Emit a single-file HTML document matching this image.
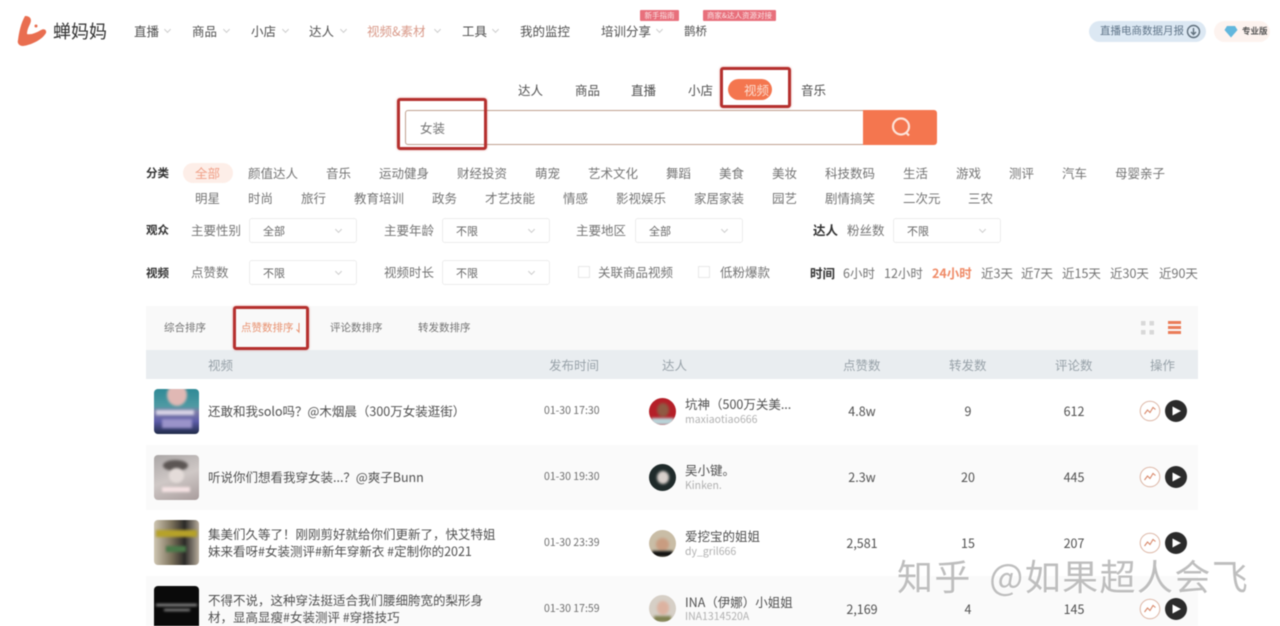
<!DOCTYPE html>
<html lang="zh-CN"><head><meta charset="utf-8"><title>蝉妈妈</title>
<style>
*{box-sizing:border-box;margin:0;padding:0}
html,body{width:1280px;height:626px;overflow:hidden;background:#fff}
body{position:relative;font-family:"Noto Sans CJK SC","Liberation Sans",sans-serif;color:#555}
#w{position:absolute;left:0;top:0;width:1280px;height:626px;overflow:hidden;filter:blur(.5px)}
.a{position:absolute}
.t{position:absolute;white-space:nowrap;line-height:20px;height:20px;font-size:12.5px}
.n{color:#505050}
.b{font-weight:700;color:#333;font-size:11.5px}
.g{color:#747474}
.s{position:absolute;width:108px;height:25px;border:1px solid #ececec;border-radius:3px;background:#fff}
.s span{position:absolute;left:13px;top:2px;font-size:11px;line-height:20px;color:#666}
.s i,.c{position:absolute;width:5px;height:5px;border-right:1px solid #ccc;border-bottom:1px solid #ccc;transform:rotate(45deg)}
.s i{right:15px;top:8px}
.cb{position:absolute;width:12px;height:12px;border:1px solid #e8e8e8;background:#fff}
.r{position:absolute;left:146px;width:1052px}
.th{position:absolute;left:154px;width:45px;height:45px;border-radius:4px;overflow:hidden}
.th div,.av div{filter:blur(1.2px)}
.av{position:absolute;left:649px;width:27px;height:27px;border-radius:50%;overflow:hidden}
.ctr{transform:translateX(-50%)}
.rb{position:absolute;border:3px solid #b5302e;border-radius:3px;box-shadow:0 0 2px rgba(200,70,60,.5)}
.tag{position:absolute;height:11px;background:#e8707c;color:#fbe3e5;font-size:7.5px;line-height:11px;text-align:center;border-radius:1px;white-space:nowrap}
.sub{font-size:10.5px;color:#b0b0b0}
.tm{font-size:10.5px;color:#6e6e6e}
</style></head><body><div id="w">

<!-- logo -->
<svg class="a" style="left:16px;top:15px" width="32" height="32" viewBox="0 0 32 32"><path d="M9 1C15 1 16 5 14 9C12 13 11 16 11 19C15 20 20 18 25 15C28 13 31 15 30 18C26 25 15 30 7 31C3 31 1 28 2 25C3 17 5 8 9 1Z" fill="#e96e50"/><circle cx="20" cy="11" r="1.500" fill="#e96e50"/></svg>
<div class="t" style="left:53px;top:20px;font-size:18px;line-height:22px;height:22px;color:#333">蝉妈妈</div>

<!-- nav -->
<div class="t n" style="left:134px;top:21px">直播</div><i class="c" style="left:165px;top:27px"></i>
<div class="t n" style="left:192px;top:21px">商品</div><i class="c" style="left:224px;top:27px"></i>
<div class="t n" style="left:251px;top:21px">小店</div><i class="c" style="left:283px;top:27px"></i>
<div class="t n" style="left:309px;top:21px">达人</div><i class="c" style="left:341px;top:27px"></i>
<div class="t" style="left:367px;top:21px;color:#d99a8a">视频&amp;素材</div><i class="c" style="left:435px;top:27px"></i>
<div class="t n" style="left:462px;top:21px">工具</div><i class="c" style="left:493px;top:27px"></i>
<div class="t n" style="left:520px;top:21px">我的监控</div>
<div class="t n" style="left:601px;top:21px">培训分享</div><i class="c" style="left:657px;top:27px"></i>
<div class="t n" style="left:684px;top:21px;font-size:11.5px">鹊桥</div>
<div class="tag" style="left:640px;top:10px;width:39px">新手指南</div>
<div class="tag" style="left:703px;top:10px;width:73px">商家&amp;达人资源对接</div>

<div class="a" style="left:1089px;top:21px;width:117px;height:21px;border-radius:11px;background:#dce8f3"></div>
<div class="t" style="left:1100px;top:21px;font-size:10.5px;color:#5f7488">直播电商数据月报</div>
<svg class="a" style="left:1186px;top:24px" width="15" height="15" viewBox="0 0 15 15"><circle cx="7.500" cy="7.500" r="6" fill="none" stroke="#5f6f7c" stroke-width="1.400"/><path d="M7.500 4V10M5 8L7.500 10.500L10 8" fill="none" stroke="#5f6f7c" stroke-width="1.400"/></svg>
<div class="a" style="left:1214px;top:21px;width:56px;height:21px;border-radius:11px;background:#fdf3ef"></div>
<svg class="a" style="left:1224px;top:25px" width="14" height="13" viewBox="0 0 14 13"><path d="M3 1H11L13.500 5L7 12.500L.5 5Z" fill="#62b7dd"/></svg>
<div class="t" style="left:1242px;top:21px;font-size:8.500px;font-weight:700;color:#555">专业版</div>

<!-- tabs -->
<div class="t n" style="left:518px;top:80px">达人</div>
<div class="t n" style="left:575px;top:80px">商品</div>
<div class="t n" style="left:631px;top:80px">直播</div>
<div class="t n" style="left:688px;top:80px">小店</div>
<div class="a" style="left:728px;top:79px;width:44px;height:21px;border-radius:11px;background:#f4764f"></div>
<div class="t" style="left:744px;top:80px;color:#fbdccf">视频</div>
<div class="t n" style="left:801px;top:80px">音乐</div>

<!-- search -->
<div class="a" style="left:405px;top:110px;width:460px;height:35px;border:1px solid #bfa08f;border-radius:3px 0 0 3px;background:#fff"></div>
<div class="a" style="left:863px;top:110px;width:74px;height:35px;background:#f4764f;border-radius:0 3px 3px 0"></div>
<svg class="a" style="left:889px;top:115px" width="24" height="24" viewBox="0 0 24 24"><circle cx="12" cy="11.500" r="8" fill="none" stroke="#fde3d8" stroke-width="2.200"/><path d="M17 17.500L20 20.500" stroke="#fde3d8" stroke-width="2.200"/></svg>
<div class="t g" style="left:420px;top:118px">女装</div>

<!-- categories -->
<div class="t b" style="left:146px;top:163px">分类</div>
<div class="a" style="left:183px;top:163px;width:50px;height:20px;border-radius:10px;background:#fdeee8"></div>
<div class="t" style="left:195px;top:163px;color:#f0a088">全部</div>
<div class="t g" style="left:248px;top:163px">颜值达人</div>
<div class="t g" style="left:326px;top:163px">音乐</div>
<div class="t g" style="left:379px;top:163px">运动健身</div>
<div class="t g" style="left:457px;top:163px">财经投资</div>
<div class="t g" style="left:535px;top:163px">萌宠</div>
<div class="t g" style="left:588px;top:163px">艺术文化</div>
<div class="t g" style="left:666px;top:163px">舞蹈</div>
<div class="t g" style="left:719px;top:163px">美食</div>
<div class="t g" style="left:772px;top:163px">美妆</div>
<div class="t g" style="left:825px;top:163px">科技数码</div>
<div class="t g" style="left:903px;top:163px">生活</div>
<div class="t g" style="left:956px;top:163px">游戏</div>
<div class="t g" style="left:1009px;top:163px">测评</div>
<div class="t g" style="left:1062px;top:163px">汽车</div>
<div class="t g" style="left:1115px;top:163px">母婴亲子</div>

<div class="t g" style="left:195px;top:188px">明星</div>
<div class="t g" style="left:248px;top:188px">时尚</div>
<div class="t g" style="left:301px;top:188px">旅行</div>
<div class="t g" style="left:354px;top:188px">教育培训</div>
<div class="t g" style="left:432px;top:188px">政务</div>
<div class="t g" style="left:485px;top:188px">才艺技能</div>
<div class="t g" style="left:563px;top:188px">情感</div>
<div class="t g" style="left:616px;top:188px">影视娱乐</div>
<div class="t g" style="left:694px;top:188px">家居家装</div>
<div class="t g" style="left:772px;top:188px">园艺</div>
<div class="t g" style="left:825px;top:188px">剧情搞笑</div>
<div class="t g" style="left:903px;top:188px">二次元</div>
<div class="t g" style="left:968px;top:188px">三农</div>

<!-- filters -->
<div class="t b" style="left:146px;top:220px">观众</div>
<div class="t g" style="left:191px;top:220px">主要性别</div>
<div class="s" style="left:249px;top:218px"><span>全部</span><i></i></div>
<div class="t g" style="left:384px;top:220px">主要年龄</div>
<div class="s" style="left:442px;top:218px"><span>不限</span><i></i></div>
<div class="t g" style="left:576px;top:220px">主要地区</div>
<div class="s" style="left:635px;top:218px"><span>全部</span><i></i></div>
<div class="t b" style="left:813px;top:220px;font-size:12.500px">达人</div>
<div class="t g" style="left:847px;top:220px">粉丝数</div>
<div class="s" style="left:893px;top:218px"><span>不限</span><i></i></div>

<div class="t b" style="left:146px;top:263px">视频</div>
<div class="t g" style="left:191px;top:262px">点赞数</div>
<div class="s" style="left:249px;top:260px"><span>不限</span><i></i></div>
<div class="t g" style="left:384px;top:262px">视频时长</div>
<div class="s" style="left:442px;top:260px"><span>不限</span><i></i></div>
<div class="cb" style="left:578px;top:266px"></div>
<div class="t g" style="left:598px;top:262px">关联商品视频</div>
<div class="cb" style="left:698px;top:266px"></div>
<div class="t g" style="left:720px;top:262px">低粉爆款</div>
<div class="t b" style="left:810px;top:263px;font-size:12.500px">时间</div>
<div class="t g" style="left:843px;top:263px">6小时</div>
<div class="t g" style="left:884px;top:263px">12小时</div>
<div class="t" style="left:932px;top:263px;font-weight:700;color:#ef8a66">24小时</div>
<div class="t g" style="left:981px;top:263px">近3天</div>
<div class="t g" style="left:1021px;top:263px">近7天</div>
<div class="t g" style="left:1062px;top:263px">近15天</div>
<div class="t g" style="left:1110px;top:263px">近30天</div>
<div class="t g" style="left:1159px;top:263px">近90天</div>

<!-- toolbar -->
<div class="r" style="top:306px;height:44px;background:#f9f9f9"></div>
<div class="t g" style="left:164px;top:318px;font-size:10.500px">综合排序</div>
<div class="t" style="left:241px;top:318px;font-size:10.500px;color:#e8916f">点赞数排序</div>
<svg class="a" style="left:295px;top:322px" width="7" height="12" viewBox="0 0 7 12"><path d="M4 1V10L1.500 7.500" fill="none" stroke="#e8916f" stroke-width="1"/></svg>
<div class="t g" style="left:330px;top:318px;font-size:10.500px">评论数排序</div>
<div class="t g" style="left:418px;top:318px;font-size:10.500px">转发数排序</div>
<svg class="a" style="left:1141px;top:321px" width="13" height="14" viewBox="0 0 13 14" fill="#d8d8d8"><rect width="4.500" height="4.500"/><rect x="8.500" width="4.500" height="4.500"/><rect y="9" width="4.500" height="4.500"/><rect x="8.500" y="9" width="4.500" height="4.500"/></svg>
<svg class="a" style="left:1168px;top:321px" width="13" height="14" viewBox="0 0 13 14" fill="#ea7c58"><rect width="13" height="3"/><rect y="5" width="13" height="3"/><rect y="10" width="13" height="3"/></svg>

<!-- table header -->
<div class="r" style="top:350px;height:29px;background:#e9edf0"></div>
<div class="t" style="left:208px;top:355px;color:#98a2a9">视频</div>
<div class="t" style="left:549px;top:355px;color:#98a2a9">发布时间</div>
<div class="t" style="left:662px;top:355px;color:#98a2a9">达人</div>
<div class="t" style="left:843px;top:355px;color:#98a2a9">点赞数</div>
<div class="t" style="left:949px;top:355px;color:#98a2a9">转发数</div>
<div class="t" style="left:1055px;top:355px;color:#98a2a9">评论数</div>
<div class="t" style="left:1150px;top:355px;color:#98a2a9">操作</div>

<!-- row backgrounds -->
<div class="r" style="top:445px;height:65px;background:#fafafa"></div>
<div class="r" style="top:576px;height:50px;background:#fafafa"></div>

<!-- thumbs -->
<div class="th" style="top:389px;background:linear-gradient(180deg,#2f8a96 0,#4f9aa3 38%,#7f7fa8 50%,#5d5ca8 72%,#1f2a48 100%)"><div class="a" style="left:13px;top:-5px;width:20px;height:22px;border-radius:50%;background:#e0b8b4"></div><div class="a" style="left:2px;top:21px;width:38px;height:5px;background:#d8d4e6"></div><div class="a" style="left:8px;top:30px;width:30px;height:9px;background:#9a93c9"></div></div>
<div class="th" style="top:455px;background:linear-gradient(160deg,#aaa6a6,#cfc8c6 50%,#a89c9c)"><div class="a" style="left:9px;top:5px;width:25px;height:11px;border-radius:50%;background:#5c5654"></div><div class="a" style="left:15px;top:13px;width:15px;height:15px;border-radius:50%;background:#e4dcd9"></div><div class="a" style="left:8px;top:32px;width:28px;height:5px;background:#f6e3e4"></div></div>
<div class="th" style="top:520px;background:linear-gradient(90deg,#cfc6b2,#7a705a 40%,#2c2a28 68%,#b8ad9d)"><div class="a" style="left:2px;top:10px;width:41px;height:7px;background:#b6a228"></div><div class="a" style="left:12px;top:26px;width:20px;height:6px;background:#4a7a4a"></div></div>
<div class="th" style="top:586px;background:#0a0a0a"><div class="a" style="left:2px;top:18px;width:41px;height:2px;background:#aaa"></div><div class="a" style="left:10px;top:23px;width:26px;height:2px;background:#999"></div></div>

<!-- row texts -->
<div class="t n" style="left:208px;top:401px">还敢和我solo吗？@木烟晨（300万女装逛街）</div>
<div class="t n" style="left:208px;top:467px">听说你们想看我穿女装...？@爽子Bunn</div>
<div class="t n" style="left:208px;top:524px">集美们久等了！刚刚剪好就给你们更新了，快艾特姐</div>
<div class="t n" style="left:208px;top:541px">妹来看呀#女装测评#新年穿新衣 #定制你的2021</div>
<div class="t n" style="left:208px;top:590px">不得不说，这种穿法挺适合我们腰细胯宽的梨形身</div>
<div class="t n" style="left:208px;top:607px">材，显高显瘦#女装测评 #穿搭技巧</div>

<div class="t tm" style="left:544px;top:401px">01-30 17:30</div>
<div class="t tm" style="left:544px;top:467px">01-30 19:30</div>
<div class="t tm" style="left:544px;top:533px">01-30 23:39</div>
<div class="t tm" style="left:544px;top:599px">01-30 17:59</div>

<!-- avatars -->
<div class="av" style="top:398px;background:#b51f28"><div class="a" style="left:8px;top:5px;width:12px;height:14px;border-radius:50%;background:#8f5a43"></div><div class="a" style="left:2px;top:20px;width:23px;height:7px;background:#b9d3d8"></div></div>
<div class="av" style="top:464px;background:#1f2a2a"><div class="a" style="left:8px;top:7px;width:12px;height:13px;border-radius:50%;background:#d8d0cc"></div></div>
<div class="av" style="top:530px;background:#c9bda6"><div class="a" style="left:7px;top:8px;width:13px;height:13px;border-radius:50%;background:#c99c80"></div><div class="a" style="left:3px;top:21px;width:21px;height:6px;background:#111"></div></div>
<div class="av" style="top:595px;background:#d6cfc6"><div class="a" style="left:8px;top:6px;width:12px;height:14px;border-radius:50%;background:#dcb2a0"></div><div class="a" style="left:5px;top:21px;width:17px;height:6px;background:#7f8050"></div></div>

<div class="t n" style="left:685px;top:394px">坑神（500万关美...</div>
<div class="t sub" style="left:685px;top:410px">maxiaotiao666</div>
<div class="t n" style="left:685px;top:460px">吴小键。</div>
<div class="t sub" style="left:685px;top:476px">Kinken.</div>
<div class="t n" style="left:685px;top:526px">爱挖宝的姐姐</div>
<div class="t sub" style="left:685px;top:542px">dy_gril666</div>
<div class="t n" style="left:685px;top:592px">INA（伊娜）小姐姐</div>
<div class="t sub" style="left:685px;top:607px">INA1314520A</div>

<!-- numbers -->
<div class="t n ctr" style="left:862px;top:401px">4.8w</div><div class="t n ctr" style="left:968px;top:401px">9</div><div class="t n ctr" style="left:1074px;top:401px">612</div>
<div class="t n ctr" style="left:862px;top:467px">2.3w</div><div class="t n ctr" style="left:968px;top:467px">20</div><div class="t n ctr" style="left:1074px;top:467px">445</div>
<div class="t n ctr" style="left:862px;top:533px">2,581</div><div class="t n ctr" style="left:968px;top:533px">15</div><div class="t n ctr" style="left:1074px;top:533px">207</div>
<div class="t n ctr" style="left:862px;top:599px">2,169</div><div class="t n ctr" style="left:968px;top:599px">4</div><div class="t n ctr" style="left:1074px;top:599px">145</div>

<!-- action icons -->
<svg class="a" style="left:1139px;top:400px" width="48" height="22" viewBox="0 0 48 22"><circle cx="11" cy="11" r="9.800" fill="#fff" stroke="#dcb5a4"/><path d="M5.500 14L8.500 10L11 12.500L14 7.500L16.500 9.500" fill="none" stroke="#d98a6c" stroke-width="1.100"/><circle cx="37" cy="11" r="11" fill="#2b2b2b"/><path d="M33.500 6.500L42 11L33.500 15.500Z" fill="#fff"/></svg>
<svg class="a" style="left:1139px;top:466px" width="48" height="22" viewBox="0 0 48 22"><circle cx="11" cy="11" r="9.800" fill="#fff" stroke="#dcb5a4"/><path d="M5.500 14L8.500 10L11 12.500L14 7.500L16.500 9.500" fill="none" stroke="#d98a6c" stroke-width="1.100"/><circle cx="37" cy="11" r="11" fill="#2b2b2b"/><path d="M33.500 6.500L42 11L33.500 15.500Z" fill="#fff"/></svg>
<svg class="a" style="left:1139px;top:532px" width="48" height="22" viewBox="0 0 48 22"><circle cx="11" cy="11" r="9.800" fill="#fff" stroke="#dcb5a4"/><path d="M5.500 14L8.500 10L11 12.500L14 7.500L16.500 9.500" fill="none" stroke="#d98a6c" stroke-width="1.100"/><circle cx="37" cy="11" r="11" fill="#2b2b2b"/><path d="M33.500 6.500L42 11L33.500 15.500Z" fill="#fff"/></svg>
<svg class="a" style="left:1139px;top:598px" width="48" height="22" viewBox="0 0 48 22"><circle cx="11" cy="11" r="9.800" fill="#fff" stroke="#dcb5a4"/><path d="M5.500 14L8.500 10L11 12.500L14 7.500L16.500 9.500" fill="none" stroke="#d98a6c" stroke-width="1.100"/><circle cx="37" cy="11" r="11" fill="#2b2b2b"/><path d="M33.500 6.500L42 11L33.500 15.500Z" fill="#fff"/></svg>

<!-- red annotation boxes -->
<div class="rb" style="left:397px;top:98px;width:90px;height:52px"></div>
<div class="rb" style="left:720px;top:67px;width:71px;height:41px"></div>
<div class="rb" style="left:233px;top:306px;width:76px;height:44px"></div>

<!-- watermark -->
<div class="t" style="left:897px;top:553px;height:44px;line-height:44px;font-size:36px;letter-spacing:1.400px;word-spacing:8px;color:#bebebe;text-shadow:1px 1px 0 rgba(255,255,255,.8)">知乎 @如果超人会飞</div>
</div></body></html>
